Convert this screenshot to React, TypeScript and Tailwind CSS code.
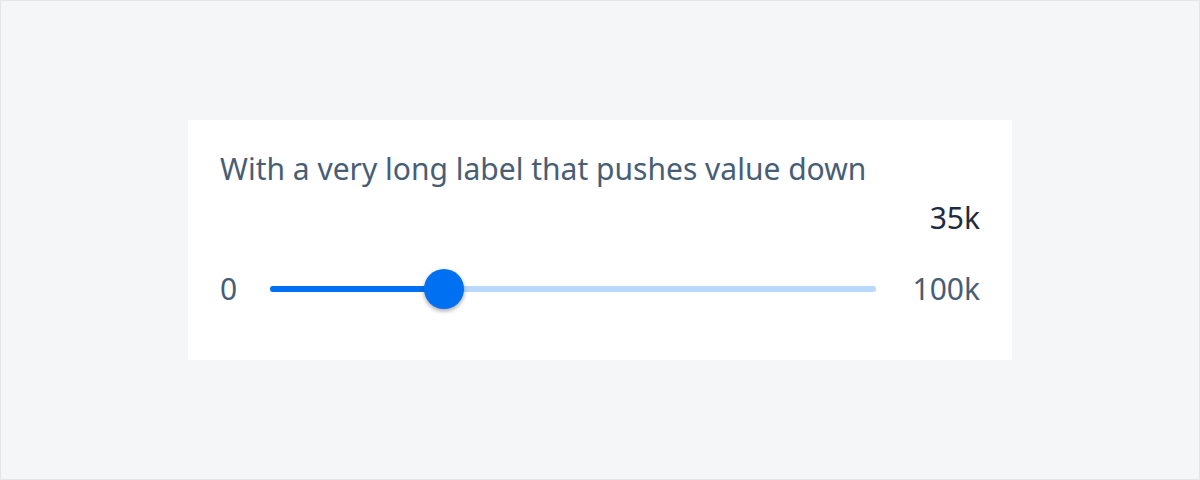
export default function App() {
  const value = 35
  // thumb position measured from the screenshot (not linear to value)
  const pct = 28.7

  return (
    <div
      className="w-[1200px] h-[480px] bg-[#f5f6f7] border border-[#e4e7ea] flex items-center justify-center"
      style={{ fontFamily: '"Noto Sans", "Open Sans", sans-serif' }}
    >
      <div className="w-[824px] h-[240px] bg-white px-8 pt-[31px] flex flex-col">
        <div className="text-[30px] leading-[36px] text-[#475e75]">
          With a very long label that pushes value down
        </div>
        <div className="mt-[13px] text-right text-[30px] leading-[36px] text-[#1d2d3e]">{value}k</div>
        <div className="mt-[33px] flex items-center h-[40px]">
          <span className="text-[30px] leading-[36px] text-[#475e75] w-[50px]">0</span>
          <div className="relative flex-1 h-[6px] rounded-full bg-[#b8d9fb]">
            <div className="absolute left-0 top-0 h-full rounded-full bg-[#0070f2]" style={{ width: `${pct}%` }} />
            <div
              className="absolute top-1/2 w-[40px] h-[40px] -translate-x-1/2 -translate-y-1/2 rounded-full bg-[#0070f2] shadow-[0_2px_4px_rgba(0,0,0,0.35)]"
              style={{ left: `${pct}%` }}
            />
          </div>
          <span className="text-[30px] leading-[36px] text-[#475e75] w-[104px] text-right">100k</span>
        </div>
      </div>
    </div>
  )
}
